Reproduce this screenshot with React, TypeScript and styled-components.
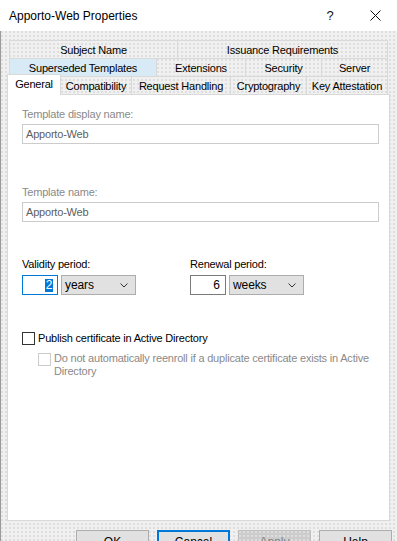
import React from "react";
import styled, { createGlobalStyle, css } from "styled-components";

const GlobalStyle = createGlobalStyle`
  html, body {
    margin: 0;
    padding: 0;
    width: 397px;
    height: 541px;
    overflow: hidden;
    background: #f0f0f0;
  }
  body {
    font-family: "Liberation Sans", Arial, sans-serif;
    font-size: 11px;
    letter-spacing: -0.2px;
    color: #000;
  }
  * { box-sizing: border-box; }
`;

const dots = css`
  background-image: radial-gradient(circle at 1px 1px, #dedede 0.7px, transparent 0.9px);
  background-size: 4px 4px;
`;

const Window = styled.div`
  width: 397px;
  height: 541px;
  display: flex;
  flex-direction: column;
  overflow: hidden;
`;

const TitleBar = styled.div`
  height: 31px;
  flex: 0 0 31px;
  background: #ffffff;
  display: flex;
  align-items: center;
  padding-left: 9px;
`;

const Title = styled.div`
  flex: 1;
  font-size: 12px;
  letter-spacing: 0;
  color: #000;
`;

const CaptionButton = styled.div<{ $w: number }>`
  width: ${(p) => p.$w}px;
  height: 31px;
  display: flex;
  align-items: center;
  justify-content: center;
  font-size: 13px;
  letter-spacing: 0;
  color: #111;
`;

const Body = styled.div`
  flex: 1;
  background-color: #f0f0f0;
  ${dots};
  border-left: 1px solid #9a9a9a;
  padding: 9px 0 0 6px;
  display: flex;
  flex-direction: column;
`;

const TabStrip = styled.div`
  width: 383px;
  display: flex;
  flex-direction: column;
`;

const TabRow = styled.div<{ $indent: number }>`
  height: 18px;
  display: flex;
  align-items: flex-start;
  padding-left: ${(p) => p.$indent}px;
`;

const Tab = styled.div<{ $w: number; $selected?: boolean; $hover?: boolean }>`
  width: ${(p) => p.$w}px;
  height: 18px;
  flex: 0 0 auto;
  display: flex;
  align-items: center;
  justify-content: center;
  border-top: 1px solid #d9d9d9;
  border-left: 1px solid #d9d9d9;
  white-space: nowrap;
  padding-top: 1px;
  background: ${(p) => (p.$hover ? "#d9eaf7" : "transparent")};
  &:last-child {
    border-right: 1px solid #d9d9d9;
  }
  ${(p) =>
    p.$selected &&
    css`
      height: 21px;
      margin-top: -2px;
      background: #ffffff;
      border-right: 1px solid #d9d9d9;
      position: relative;
      z-index: 1;
      padding-top: 0;
      padding-bottom: 3px;
      & + div {
        border-left: none;
      }
    `}
`;

const Panel = styled.div`
  width: 383px;
  height: 427px;
  background: #ffffff;
  border: 1px solid #d9d9d9;
  padding: 12px 0 0 14px;
  display: flex;
  flex-direction: column;
`;

const FieldLabel = styled.div<{ $disabled?: boolean; $gap?: number }>`
  height: 14px;
  line-height: 14px;
  margin-top: ${(p) => p.$gap ?? 0}px;
  color: ${(p) => (p.$disabled ? "#8a8a8a" : "#000")};
  white-space: nowrap;
`;

const TextBox = styled.div`
  width: 357px;
  height: 20px;
  margin-top: 3px;
  border: 1px solid #cccccc;
  padding-left: 3px;
  line-height: 18px;
  color: #606060;
`;

const PeriodRow = styled.div`
  margin-top: 35px;
  display: grid;
  grid-template-columns: 168px auto;
`;

const PeriodGroup = styled.div`
  display: flex;
  flex-direction: column;
`;

const Controls = styled.div`
  margin-top: 4px;
  display: flex;
  gap: 3px;
`;

const NumberBox = styled.div<{ $focused?: boolean }>`
  width: 36px;
  height: 20px;
  border: 1px solid ${(p) => (p.$focused ? "#0078d7" : "#7a7a7a")};
  display: flex;
  align-items: center;
  justify-content: flex-end;
  padding-right: ${(p) => (p.$focused ? 4 : 5)}px;
  font-size: 12px;
  letter-spacing: 0;
`;

const Selected = styled.span`
  background: #0078d7;
  color: #fff;
  line-height: 13px;
  padding: 0 0.5px;
`;

const Select = styled.div`
  width: 75px;
  height: 20px;
  background: #e1e1e1;
  border: 1px solid #adadad;
  display: flex;
  align-items: center;
  justify-content: space-between;
  padding: 0 7px 0 3px;
  font-size: 12px;
  letter-spacing: -0.1px;
`;

const CheckRow = styled.div<{ $gap: number; $indent?: number; $top?: boolean }>`
  margin-top: ${(p) => p.$gap}px;
  margin-left: ${(p) => p.$indent ?? 0}px;
  display: flex;
  align-items: ${(p) => (p.$top ? "flex-start" : "center")};
  gap: 3px;
  line-height: ${(p) => (p.$top ? 13 : 14)}px;
`;

const CheckBox = styled.div<{ $disabled?: boolean }>`
  width: 13px;
  height: 13px;
  flex: 0 0 13px;
  border: 1px solid ${(p) => (p.$disabled ? "#cccccc" : "#333333")};
  background: #fff;
  margin-top: ${(p) => (p.$disabled ? 1 : 0)}px;
`;

const CheckText = styled.div<{ $disabled?: boolean }>`
  color: ${(p) => (p.$disabled ? "#8a8a8a" : "#000")};
  max-width: 325px;
`;

const ButtonRow = styled.div`
  margin-top: 9px;
  display: flex;
  justify-content: flex-end;
  gap: 8px;
  padding-right: 5px;
`;

const Button = styled.div<{ $variant?: "default" | "disabled" }>`
  width: 73px;
  height: 23px;
  flex: 0 0 73px;
  display: flex;
  align-items: center;
  justify-content: center;
  background: #e1e1e1;
  border: 1px solid #adadad;
  font-size: 12px;
  letter-spacing: 0;
  ${(p) =>
    p.$variant === "default" &&
    css`
      border: 2px solid #0078d7;
    `}
  ${(p) =>
    p.$variant === "disabled" &&
    css`
      background-color: #cccccc;
      ${dots};
      border-color: #bfbfbf;
      color: #838383;
    `}
`;

const Chevron = () => (
  <svg width="8" height="5" viewBox="0 0 8 5">
    <polyline points="0.5,0.5 4,4 7.5,0.5" fill="none" stroke="#333" strokeWidth="1" />
  </svg>
);

const CloseIcon = () => (
  <svg width="11" height="11" viewBox="0 0 11 11">
    <path d="M0.5 0.5 L10.5 10.5 M10.5 0.5 L0.5 10.5" stroke="#111" strokeWidth="1" />
  </svg>
);

const rows: { indent: number; tabs: { label: string; w: number; selected?: boolean; hover?: boolean }[] }[] = [
  {
    indent: 2,
    tabs: [
      { label: "Subject Name", w: 168 },
      { label: "Issuance Requirements", w: 211 },
    ],
  },
  {
    indent: 2,
    tabs: [
      { label: "Superseded Templates", w: 147, hover: true },
      { label: "Extensions", w: 89 },
      { label: "Security", w: 76 },
      { label: "Server", w: 67 },
    ],
  },
  {
    indent: 0,
    tabs: [
      { label: "General", w: 54, selected: true },
      { label: "Compatibility", w: 70 },
      { label: "Request Handling", w: 99 },
      { label: "Cryptography", w: 76 },
      { label: "Key Attestation", w: 82 },
    ],
  },
];

export default function App() {
  return (
    <>
      <GlobalStyle />
      <Window>
        <TitleBar>
          <Title>Apporto-Web Properties</Title>
          <CaptionButton $w={46}>?</CaptionButton>
          <CaptionButton $w={44}>
            <CloseIcon />
          </CaptionButton>
        </TitleBar>
        <Body>
          <TabStrip>
            {rows.map((row, i) => (
              <TabRow key={i} $indent={row.indent}>
                {row.tabs.map((t) => (
                  <Tab key={t.label} $w={t.w} $selected={t.selected} $hover={t.hover}>
                    {t.label}
                  </Tab>
                ))}
              </TabRow>
            ))}
          </TabStrip>
          <Panel>
            <FieldLabel $disabled>Template display name:</FieldLabel>
            <TextBox>Apporto-Web</TextBox>
            <FieldLabel $disabled $gap={41}>
              Template name:
            </FieldLabel>
            <TextBox>Apporto-Web</TextBox>
            <PeriodRow>
              <PeriodGroup>
                <FieldLabel>Validity period:</FieldLabel>
                <Controls>
                  <NumberBox $focused>
                    <Selected>2</Selected>
                  </NumberBox>
                  <Select>
                    <span>years</span>
                    <Chevron />
                  </Select>
                </Controls>
              </PeriodGroup>
              <PeriodGroup>
                <FieldLabel>Renewal period:</FieldLabel>
                <Controls>
                  <NumberBox>6</NumberBox>
                  <Select>
                    <span>weeks</span>
                    <Chevron />
                  </Select>
                </Controls>
              </PeriodGroup>
            </PeriodRow>
            <CheckRow $gap={36}>
              <CheckBox />
              <CheckText>Publish certificate in Active Directory</CheckText>
            </CheckRow>
            <CheckRow $gap={7} $indent={16} $top>
              <CheckBox $disabled />
              <CheckText $disabled>
                Do not automatically reenroll if a duplicate certificate exists in Active Directory
              </CheckText>
            </CheckRow>
          </Panel>
          <ButtonRow>
            <Button>OK</Button>
            <Button $variant="default">Cancel</Button>
            <Button $variant="disabled">Apply</Button>
            <Button>Help</Button>
          </ButtonRow>
        </Body>
      </Window>
    </>
  );
}
